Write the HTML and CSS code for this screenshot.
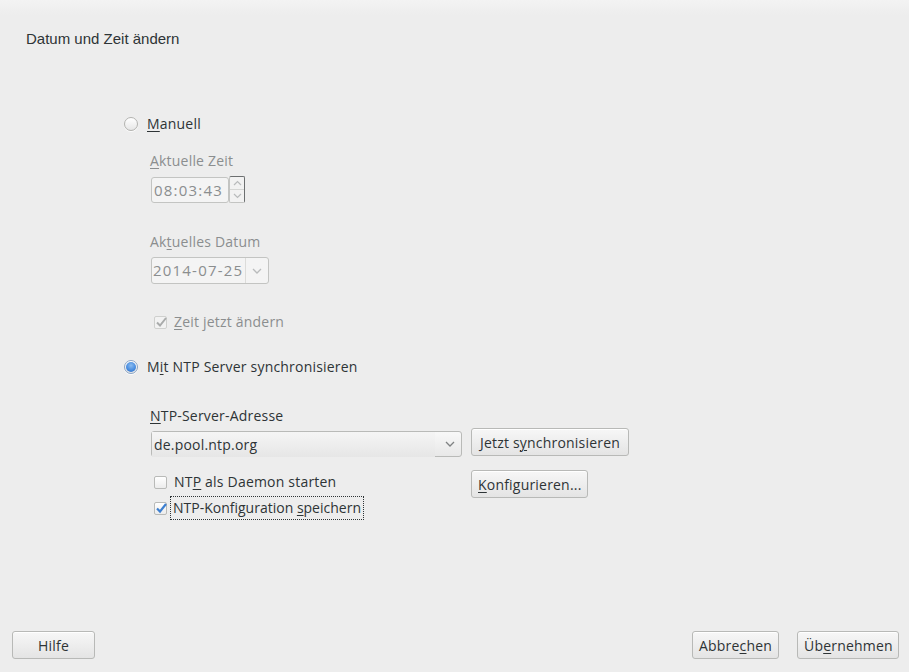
FILE: index.html
```html
<!DOCTYPE html>
<html lang="de">
<head>
<meta charset="utf-8">
<title>Datum und Zeit ändern</title>
<link rel="stylesheet" href="styles.css">
</head>
<body>
<div class="window">
  <div class="topstrip"></div>
  <h1 class="title">Datum und Zeit ändern</h1>
  <main class="content">
    <div class="radio-row manual-row">
      <span class="radio"></span>
      <span class="label"><u>M</u>anuell</span>
    </div>
    <div class="sub disabled">
      <div class="field-label"><u>A</u>ktuelle Zeit</div>
      <div class="spin">
        <div class="spin-entry">08:03:43</div>
        <div class="spin-buttons">
          <span class="spin-btn up"><svg width="9" height="6" viewBox="0 0 9 6"><path d="M1 5 L4.5 1.5 L8 5" fill="none" stroke="#b9bbbc" stroke-width="1.2"/></svg></span>
          <span class="spin-btn down"><svg width="9" height="6" viewBox="0 0 9 6"><path d="M1 1 L4.5 4.5 L8 1" fill="none" stroke="#b9bbbc" stroke-width="1.2"/></svg></span>
        </div>
      </div>
      <div class="field-label date-label">Ak<u>t</u>uelles Datum</div>
      <div class="combo date-combo">
        <span class="combo-text">2014-07-25</span>
        <span class="combo-arrow"><svg width="10" height="6" viewBox="0 0 10 6"><path d="M1 1 L5 5 L9 1" fill="none" stroke="#b9bbbc" stroke-width="1.3"/></svg></span>
      </div>
      <div class="check-row change-row">
        <span class="check checked disabled-check"><svg width="12" height="11" viewBox="0 0 12 11"><path d="M2 5.5 L5 8.5 L11 1" fill="none" stroke="#a9abab" stroke-width="2"/></svg></span>
        <span class="label"><u>Z</u>eit jetzt ändern</span>
      </div>
    </div>
    <div class="radio-row ntp-row">
      <span class="radio selected"><span class="dot"></span></span>
      <span class="label">M<u>i</u>t NTP Server synchronisieren</span>
    </div>
    <div class="sub">
      <div class="field-label ntp-label"><u>N</u>TP-Server-Adresse</div>
      <div class="ntp-grid">
        <div class="combo server-combo">
          <span class="combo-text">de.pool.ntp.org</span>
          <span class="combo-arrow"><svg width="10" height="6" viewBox="0 0 10 6"><path d="M1 1 L5 5 L9 1" fill="none" stroke="#7f8283" stroke-width="1.3"/></svg></span>
        </div>
        <button class="btn sync-btn">Jetzt s<u>y</u>nchronisieren</button>
        <div class="checks">
          <div class="check-row">
            <span class="check"></span>
            <span class="label">NT<u>P</u> als Daemon starten</span>
          </div>
          <div class="check-row save-row">
            <span class="check checked"><svg width="12" height="11" viewBox="0 0 12 11"><path d="M2 5.5 L5 8.5 L11 1" fill="none" stroke="#3d7fd0" stroke-width="2.2"/></svg></span>
            <span class="label focus">NTP-Konfiguration <u>s</u>peichern</span>
          </div>
        </div>
        <button class="btn conf-btn"><u>K</u>onfigurieren...</button>
      </div>
    </div>
  </main>
  <footer class="footer">
    <button class="btn footer-btn help-btn">Hilfe</button>
    <div class="footer-right">
      <button class="btn footer-btn cancel-btn">Abbre<u>c</u>hen</button>
      <button class="btn footer-btn ok-btn">Üb<u>e</u>rnehmen</button>
    </div>
  </footer>
</div>
</body>
</html>
```

FILE: styles.css
```css
* { box-sizing: border-box; }
html, body {
  margin: 0;
  padding: 0;
  background: #ededed;
}
body {
  font-family: "Open Sans", "DejaVu Sans", sans-serif;
  font-size: 14px;
  letter-spacing: 0.2px;
  color: #2e3436;
}
u {
  text-decoration: underline;
  text-underline-offset: 2px;
  text-decoration-thickness: 1px;
}
.window {
  width: 909px;
  height: 672px;
  display: flex;
  flex-direction: column;
  position: relative;
}
.topstrip {
  height: 15px;
  background: linear-gradient(#f3f3f3, #ededed);
}
.title {
  margin: 15px 0 0 26px;
  font-family: "Liberation Sans Narrow", "Liberation Sans", sans-serif;
  font-stretch: condensed;
  font-weight: normal;
  font-size: 15px;
  letter-spacing: 0;
  line-height: 18px;
  height: 18px;
  color: #2e3436;
}
.content {
  flex: 1;
  padding-left: 124px;
}
.label, .field-label {
  line-height: 18px;
  white-space: nowrap;
}
.radio-row, .check-row {
  display: flex;
  align-items: center;
  height: 18px;
}
.manual-row { margin-top: 67px; }
.radio {
  width: 14px;
  height: 14px;
  border-radius: 50%;
  border: 1px solid #b3b3b0;
  background: linear-gradient(#ffffff, #e6e6e6);
  margin-right: 9px;
  display: flex;
  align-items: center;
  justify-content: center;
  box-shadow: 0 1px 0 rgba(255,255,255,0.8);
}
.radio.selected {
  border-color: #8aa4c4;
}
.radio .dot {
  width: 10px;
  height: 10px;
  border-radius: 50%;
  background: radial-gradient(circle at 50% 35%, #8bbcf0 0%, #4a8ee0 55%, #2c6ac0 100%);
}
.sub { padding-left: 26px; }
.disabled { color: #8b8e8f; }
.field-label { margin-top: 19px; }
.spin {
  display: flex;
  margin-top: 6px;
  margin-left: 1px;
  height: 27px;
}
.spin-entry {
  width: 78px;
  height: 26px;
  margin-top: 1px;
  border: 1px solid #c3c4c2;
  border-radius: 3px;
  background: #f4f4f4;
  font-size: 15px;
  letter-spacing: 1.2px;
  line-height: 24px;
  padding-left: 2px;
  color: #8b8e8f;
  white-space: nowrap;
  overflow: hidden;
}
.spin-buttons {
  display: flex;
  flex-direction: column;
  width: 16px;
  height: 27px;
  border: 1px solid #c3c4c2;
  border-top-color: #6c6f70;
  border-right-color: #6c6f70;
  border-radius: 2px;
  background: #f2f2f2;
}
.spin-btn {
  flex: 1;
  display: flex;
  align-items: center;
  justify-content: center;
}
.spin-btn.up { border-bottom: 1px solid #d5d6d4; }
.date-label { margin-top: 30px; }
.combo {
  display: flex;
  align-items: center;
  border: 1px solid #c3c4c2;
  border-radius: 3px;
}
.date-combo {
  margin-top: 6px;
  margin-left: 1px;
  width: 118px;
  height: 27px;
  background: #f4f4f4;
  font-size: 15px;
  letter-spacing: 1.2px;
  color: #8b8e8f;
}
.combo-text {
  flex: 1;
  padding-left: 2px;
  white-space: nowrap;
  line-height: 25px;
  overflow: hidden;
}
.date-combo .combo-text {
  border-right: 1px solid #dcdcda;
  height: 25px;
  padding-left: 1px;
}
.combo-arrow {
  width: 22px;
  display: flex;
  align-items: center;
  justify-content: center;
}
.check {
  width: 13px;
  height: 13px;
  border: 1px solid #b9bab8;
  border-radius: 2px;
  background: linear-gradient(#ffffff, #ececec);
  margin-left: 4px;
  margin-right: 7px;
  position: relative;
  flex: none;
}
.check svg {
  position: absolute;
  left: 0;
  top: 0;
}
.disabled-check {
  background: #f2f2f2;
  border-color: #cfd0ce;
}
.change-row { margin-top: 29px; }
.ntp-row { margin-top: 27px; }
.ntp-label { margin-top: 31px; color: #2e3436; }
.ntp-grid {
  display: grid;
  grid-template-columns: 311px auto;
  column-gap: 9px;
  align-items: start;
  margin-left: 1px;
  margin-top: 3px;
}
.server-combo {
  width: 311px;
  height: 26px;
  margin-top: 3px;
  background: linear-gradient(#f8f8f8, #e8e8e8);
  border-color: #b9bab8;
}
.server-combo .combo-text {
  padding-left: 2px;
  color: #2e3436;
  background: linear-gradient(#f5f5f5, #e6e6e6);
  margin-right: 4px;
}
.btn {
  font-family: inherit;
  font-size: 14px;
  letter-spacing: 0.2px;
  color: #2e3436;
  background: linear-gradient(#f7f7f7, #e4e4e4);
  border: 1px solid #b8b9b7;
  border-radius: 3px;
  padding: 0 6px;
  height: 28px;
  white-space: nowrap;
  box-shadow: inset 0 1px 0 #ffffff;
}
.sync-btn {
  justify-self: start;
  width: 158px;
}
.checks {
  margin-top: 16px;
  margin-left: -1px;
}
.check-row + .check-row { margin-top: 8px; }
.conf-btn {
  justify-self: start;
  margin-top: 13px;
  width: 117px;
}
.focus {
  outline: 1px dotted #2e3436;
  outline-offset: 2px;
  margin-left: -1px;
  letter-spacing: 0;
}
.footer {
  display: flex;
  justify-content: space-between;
  padding: 0 10px 13px 12px;
}
.footer-right {
  display: flex;
  gap: 18px;
}
.help-btn { width: 83px; }
.cancel-btn { width: 87px; }
.ok-btn { width: 102px; }
```
